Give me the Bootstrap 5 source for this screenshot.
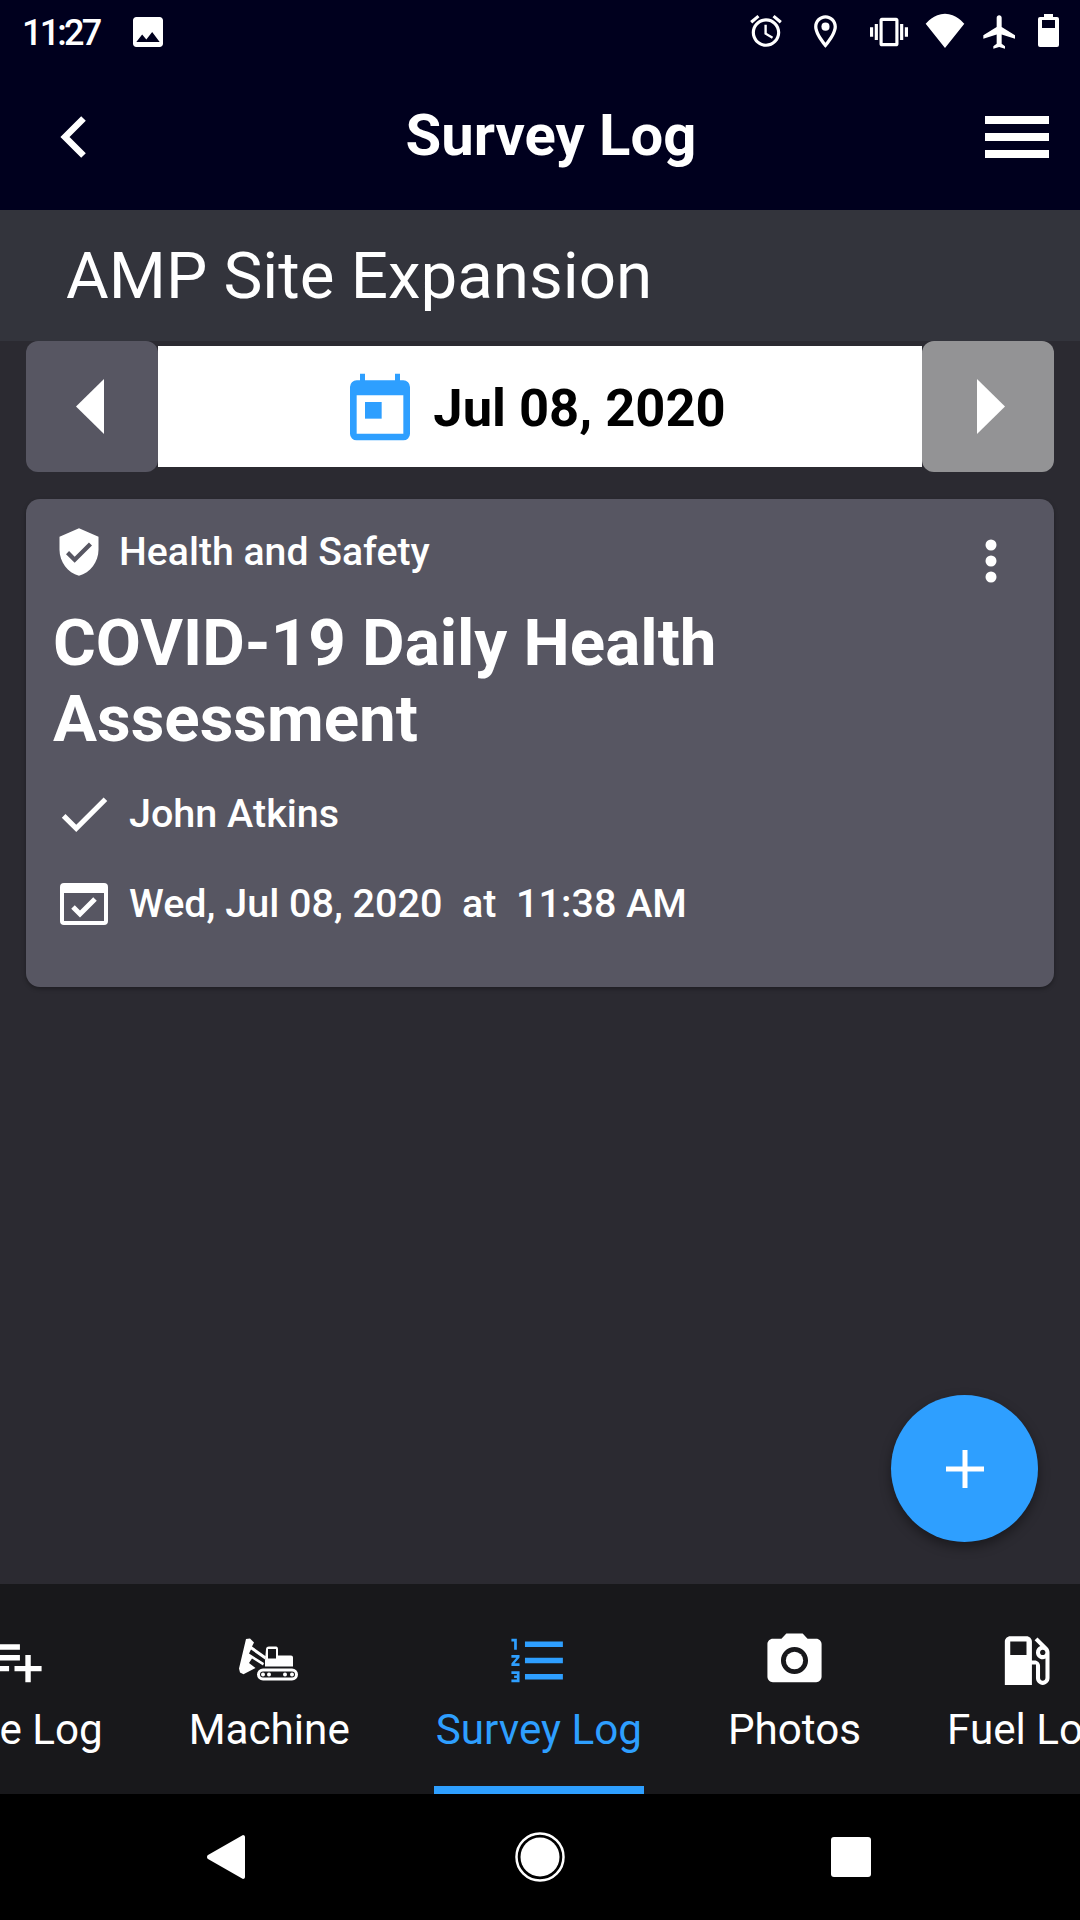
<!DOCTYPE html>
<html lang="en">
<head>
  <meta charset="UTF-8">
  <meta name="viewport" content="width=device-width, initial-scale=1.0">
  <title>Survey Log</title>
  <link href="https://cdn.jsdelivr.net/npm/bootstrap@5.3.0/dist/css/bootstrap.min.css" rel="stylesheet">
  <style>
    html, body { height: 1920px; overflow: hidden; }
    body { background-color: #2b2a31; color: #fff; font-family: Roboto, "Liberation Sans", sans-serif; }
    svg { display: block; fill: currentColor; flex: none; }
    .app { height: 1920px; }

    .status-row { height: 63px; background: #00001e; padding: 12px 21px 0 22px; }
    .clock { font-size: 36px; font-weight: 500; line-height: 42px; width: 106px; letter-spacing: -2.800px; }
    .st-pin { margin-left: 21px; }
    .st-vib { margin-left: 25px; margin-top: 1px; }
    .st-wifi { margin-left: 17px; }
    .st-plane { margin-left: 15px; }
    .st-batt { margin-left: 18px; margin-top: 2px; }

    .tool-row { height: 147px; background: #00001e; padding: 0 31px 0 60px; }
    .tool-title { font-size: 58px; font-weight: 700; line-height: 68px; margin: 0 0 3px 30px; }
    .sub-row { height: 131px; background: #33343c; padding-left: 66px; font-size: 65.500px; line-height: 70px; }

    .date-row { padding: 0 26px; height: 131px; }
    .date-step { width: 132px; height: 131px; border-radius: 12px; }
    .step-prev { background: #575662; }
    .step-next { background: #939395; }
    .step-prev svg { margin-right: 5px; }
    .step-next svg { margin-left: 5px; }
    .date-mid { height: 121px; margin-top: 5px; padding-right: 14px; background: #fff; color: #000; gap: 13px; }
    .date-text { font-size: 52.500px; font-weight: 700; line-height: 60px; margin-top: 2px; }
    .date-icon { color: #2e9fff; }

    .log-card { margin: 27px 26px 0; height: 488px; background: #575662; border-radius: 14px; padding: 26px 27px 0 27px; box-shadow: 0 2px 4px rgba(0,0,0,.3); }
    .cat-row { height: 54px; gap: 14px; font-size: 39.200px; font-weight: 500; }
    .kebab-icon { margin: 18px 30px 0 0; }
    .log-title { font-size: 65.500px; font-weight: 700; line-height: 76px; margin: 26px 0 0; width: 760px; }
    .meta-row { font-size: 39.500px; font-weight: 500; line-height: 46px; }
    .meta-name { margin-top: 26px; }
    .meta-name svg { margin: 0 14px 0 0; }
    .meta-date { margin-top: 36px; white-space: pre; }
    .meta-date svg { margin: 0 21px 0 7px; }

    .fab-btn { position: absolute; left: 891px; top: 1395px; width: 147px; height: 147px; border-radius: 50%; background: #2e9fff; box-shadow: 0 5px 12px rgba(0,0,0,.4); }

    .tab-bar { height: 210px; background: #18181b; overflow: hidden; }
    .tab-strip { margin-left: -73px; }
    .tab-item { padding: 44px 0 0; margin-right: 86px; height: 210px; font-size: 42.200px; line-height: 50px; flex: none; }
    .tab-item svg { margin-bottom: 12px; }
    .tab-on { color: #2e9fff; border-bottom: 8px solid #2e9fff; padding: 44px 2px 0; margin: 0 84px 0 -2px; }

    .sys-bar { height: 126px; background: #000; padding-left: 207px; }
    .sys-home { margin-left: 270px; }
    .sys-square { margin-left: 266px; }
  </style>
</head>
<body>
  <div class="app d-flex flex-column position-relative">

    <!-- status bar -->
    <div class="status-row d-flex align-items-start">
      <div class="clock">11:27</div>
      <svg width="40" height="40" viewBox="0 0 24 24"><path d="M21 19V5c0-1.100-.9-2-2-2H5c-1.100 0-2 .9-2 2v14c0 1.100.9 2 2 2h14c1.100 0 2-.9 2-2zM8.500 13.500l2.500 3.010L14.500 12l4.500 6H5l3.500-4.500z"/></svg>
      <div class="d-flex ms-auto">
        <svg width="38" height="38" viewBox="0 0 24 24"><path d="M22 5.720l-4.600-3.860-1.290 1.530 4.600 3.860L22 5.720zM7.880 3.390L6.600 1.860 2 5.710l1.290 1.530 4.590-3.850zM12.500 8H11v6l4.750 2.850.75-1.230-4-2.370V8zM12 4c-4.970 0-9 4.030-9 9s4.020 9 9 9c4.970 0 9-4.030 9-9s-4.030-9-9-9zm0 16c-3.870 0-7-3.130-7-7s3.130-7 7-7 7 3.130 7 7-3.130 7-7 7z"/></svg>
        <svg width="39" height="39" viewBox="0 0 24 24" class="st-pin"><path d="M12 2C8.130 2 5 5.130 5 9c0 5.250 7 13 7 13s7-7.750 7-13c0-3.870-3.130-7-7-7zM7 9c0-2.760 2.240-5 5-5s5 2.240 5 5c0 2.880-2.880 7.190-5 9.880C9.920 16.210 7 11.850 7 9z"/><circle cx="12" cy="9" r="2.500"/></svg>
        <svg width="38" height="38" viewBox="0 0 24 24" class="st-vib"><path d="M0 15h2V9H0v6zm3 2h2V7H3v10zm19-8v6h2V9h-2zm-3 8h2V7h-2v10zM16.500 3h-9C6.670 3 6 3.670 6 4.500v15c0 .83.67 1.500 1.500 1.500h9c.83 0 1.500-.67 1.500-1.500v-15c0-.83-.67-1.500-1.500-1.500zM16 19H8V5h8v14z"/></svg>
        <svg width="40" height="37" viewBox="0 0 24 22" class="st-wifi"><path d="M12 21.500 23.600 7C23.100 6.600 18.700 1 12 1 5.300 1 .9 6.600.4 7z"/></svg>
        <svg width="40" height="40" viewBox="0 0 24 24" class="st-plane"><path d="M21 16v-2l-8-5V3.500c0-.83-.67-1.500-1.500-1.500S10 2.670 10 3.500V9l-8 5v2l8-2.500V19l-2 1.500V22l3.500-1 3.500 1v-1.500L13 19v-5.500l8 2.500z"/></svg>
        <svg width="21" height="33" viewBox="0 0 21 33" class="st-batt"><path fill-rule="evenodd" d="M6 0h9v3h4a2 2 0 0 1 2 2v26a2 2 0 0 1-2 2H2a2 2 0 0 1-2-2V5a2 2 0 0 1 2-2h4zM4 6v8h13V6z"/></svg>
      </div>
    </div>

    <!-- toolbar -->
    <div class="tool-row d-flex align-items-center justify-content-between">
      <svg width="27" height="42" viewBox="0 0 27 42"><path d="M23.500 2.500 5 21l18.500 18.500" fill="none" stroke="#fff" stroke-width="6.500"/></svg>
      <div class="tool-title">Survey Log</div>
      <svg width="64" height="42" viewBox="0 0 64 42"><path d="M0 0h64v8H0zM0 17h64v8H0zM0 34h64v8H0z"/></svg>
    </div>

    <div class="sub-row d-flex align-items-center">AMP Site Expansion</div>

    <!-- date picker -->
    <div class="date-row d-flex">
      <div class="date-step step-prev d-flex align-items-center justify-content-center">
        <svg width="28" height="55" viewBox="0 0 28 55"><path d="M28 0v55L0 27.500z"/></svg>
      </div>
      <div class="date-mid flex-grow-1 d-flex align-items-center justify-content-center">
        <svg class="date-icon" width="80" height="80" viewBox="0 0 24 24"><path d="M19 4h-1V2h-1.500v2h-9V2H6v2H5a2 2 0 0 0-2 2v14a2 2 0 0 0 2 2h14a2 2 0 0 0 2-2V6a2 2 0 0 0-2-2zm0 16H5V8.500h14z"/><path d="M7.500 10.500h5v5h-5z"/></svg>
        <div class="date-text">Jul 08, 2020</div>
      </div>
      <div class="date-step step-next d-flex align-items-center justify-content-center">
        <svg width="28" height="55" viewBox="0 0 28 55"><path d="M0 0v55l28-27.500z"/></svg>
      </div>
    </div>

    <!-- survey card -->
    <div class="log-card">
      <div class="cat-row d-flex align-items-center">
        <svg width="52" height="52" viewBox="0 0 24 24"><path d="M12 1 3 5v6c0 5.550 3.840 10.740 9 12 5.160-1.260 9-6.450 9-12V5zm-2 16-4-4 1.410-1.410L10 14.170l6.590-6.590L18 9z"/></svg>
        <div class="flex-grow-1">Health and Safety</div>
        <svg width="12" height="44" viewBox="0 0 12 44" class="kebab-icon"><circle cx="6" cy="6" r="5.500"/><circle cx="6" cy="22" r="5.500"/><circle cx="6" cy="38" r="5.500"/></svg>
      </div>
      <h1 class="log-title">COVID-19 Daily Health Assessment</h1>
      <div class="meta-row meta-name d-flex align-items-center">
        <svg width="62" height="62" viewBox="0 0 24 24"><path d="M9 16.170 4.830 12l-1.420 1.410L9 19 21 7l-1.410-1.410z"/></svg>
        <div>John Atkins</div>
      </div>
      <div class="meta-row meta-date d-flex align-items-center">
        <svg width="48" height="42" viewBox="0 0 48 42"><path fill-rule="evenodd" d="M4 0h40a4 4 0 0 1 4 4v34a4 4 0 0 1-4 4H4a4 4 0 0 1-4-4V4a4 4 0 0 1 4-4zm0 10v28h40V10z"/><path d="M13 24l7 7 15-15" fill="none" stroke="#fff" stroke-width="5"/></svg>
        <div>Wed, Jul 08, 2020  at  11:38 AM</div>
      </div>
    </div>

    <div class="flex-grow-1"></div>

    <!-- add button -->
    <div class="fab-btn d-flex align-items-center justify-content-center">
      <svg width="38" height="38" viewBox="0 0 38 38"><path d="M16.500 0h5v16.500H38v5H21.500V38h-5V21.500H0v-5h16.500z"/></svg>
    </div>

    <!-- bottom tabs -->
    <div class="tab-bar">
      <div class="tab-strip d-flex">
        <div class="tab-item text-center">
          <svg width="65" height="65" viewBox="0 0 24 24" class="mx-auto"><path d="M14 10H2v2h12v-2zm0-4H2v2h12V6zm4 8v-4h-2v4h-4v2h4v4h2v-4h4v-2h-4zM2 16h8v-2H2v2z"/></svg>
          Time Log
        </div>
        <div class="tab-item text-center">
          <svg width="60" height="65" viewBox="0 0 60 44" class="mx-auto"><path d="M7 .5 11 0l4 4-2 4 14 10-1 3-14-10-2 4 15 9.500-1 2.500-11-7-3 4.500 6.500 5-12 6.200L1 34l-1-4z"/><path fill-rule="evenodd" d="M27 11q0-3 3-3h7q2 0 2 3v6h13q2 0 2 2v9H26v-6zm2-.5V20h8v-9.500z"/><path fill-rule="evenodd" d="M24 30h29a6 6 0 0 1 0 12H24a6 6 0 0 1 0-12zm0 3a3 3 0 0 0 0 6h29a3 3 0 0 0 0-6z"/><circle cx="24" cy="36" r="2"/><circle cx="30" cy="36" r="2"/><circle cx="46" cy="36" r="2"/><circle cx="53" cy="36" r="2"/></svg>
          Machine
        </div>
        <div class="tab-item tab-on text-center">
          <svg width="65" height="65" viewBox="0 0 24 24" class="mx-auto"><path d="M2 17h2v.5H3v1h1v.5H2v1h3v-4H2v1zm1-9h1V4H2v1h1v3zm-1 3h1.800L2 13.100v.9h3v-1H3.200L5 10.900V10H2v1zm5-6v2h14V5H7zm0 14h14v-2H7v2zm0-6h14v-2H7v2z"/></svg>
          Survey Log
        </div>
        <div class="tab-item text-center">
          <svg width="65" height="65" viewBox="0 0 24 24" class="mx-auto"><circle cx="12" cy="12" r="3.200"/><path d="M9 2 7.170 4H4c-1.100 0-2 .9-2 2v12c0 1.100.9 2 2 2h16c1.100 0 2-.9 2-2V6c0-1.100-.9-2-2-2h-3.170L15 2zm3 15c-2.760 0-5-2.240-5-5s2.240-5 5-5 5 2.240 5 5-2.240 5-5 5z"/></svg>
          Photos
        </div>
        <div class="tab-item text-center">
          <svg width="65" height="65" viewBox="0 0 24 24" class="mx-auto"><path d="m19.770 7.230.01-.01-3.720-3.720L15 4.560l2.110 2.110c-.94.360-1.610 1.260-1.610 2.330 0 1.380 1.120 2.500 2.500 2.500.360 0 .690-.08 1-.21v7.210c0 .550-.45 1-1 1s-1-.45-1-1V14c0-1.100-.9-2-2-2h-1V5c0-1.100-.9-2-2-2H6c-1.100 0-2 .9-2 2v16h10v-7.500h1.500v5c0 1.380 1.120 2.500 2.500 2.500s2.500-1.120 2.500-2.500V9c0-.690-.28-1.320-.73-1.770zM12 10H6V5h6v5zm6 0c-.55 0-1-.45-1-1s.45-1 1-1 1 .45 1 1-.45 1-1 1z"/></svg>
          Fuel Log
        </div>
      </div>
    </div>

    <!-- android nav -->
    <div class="sys-bar d-flex align-items-center">
      <svg width="38" height="44" viewBox="0 0 38 44"><path d="M36 0c1 0 2 .8 2 2v40c0 1.200-1 2-2 2L1 24c-1.300-.8-1.300-3.200 0-4z"/></svg>
      <svg width="50" height="50" viewBox="0 0 50 50" class="sys-home"><circle cx="25" cy="25" r="23.500" fill="none" stroke="#fff" stroke-width="2.500"/><circle cx="25" cy="25" r="19.500"/></svg>
      <svg width="40" height="40" viewBox="0 0 40 40" class="sys-square"><rect width="40" height="40" rx="3"/></svg>
    </div>
  </div>

  <script src="https://cdn.jsdelivr.net/npm/bootstrap@5.3.0/dist/js/bootstrap.bundle.min.js"></script>
</body>
</html>
